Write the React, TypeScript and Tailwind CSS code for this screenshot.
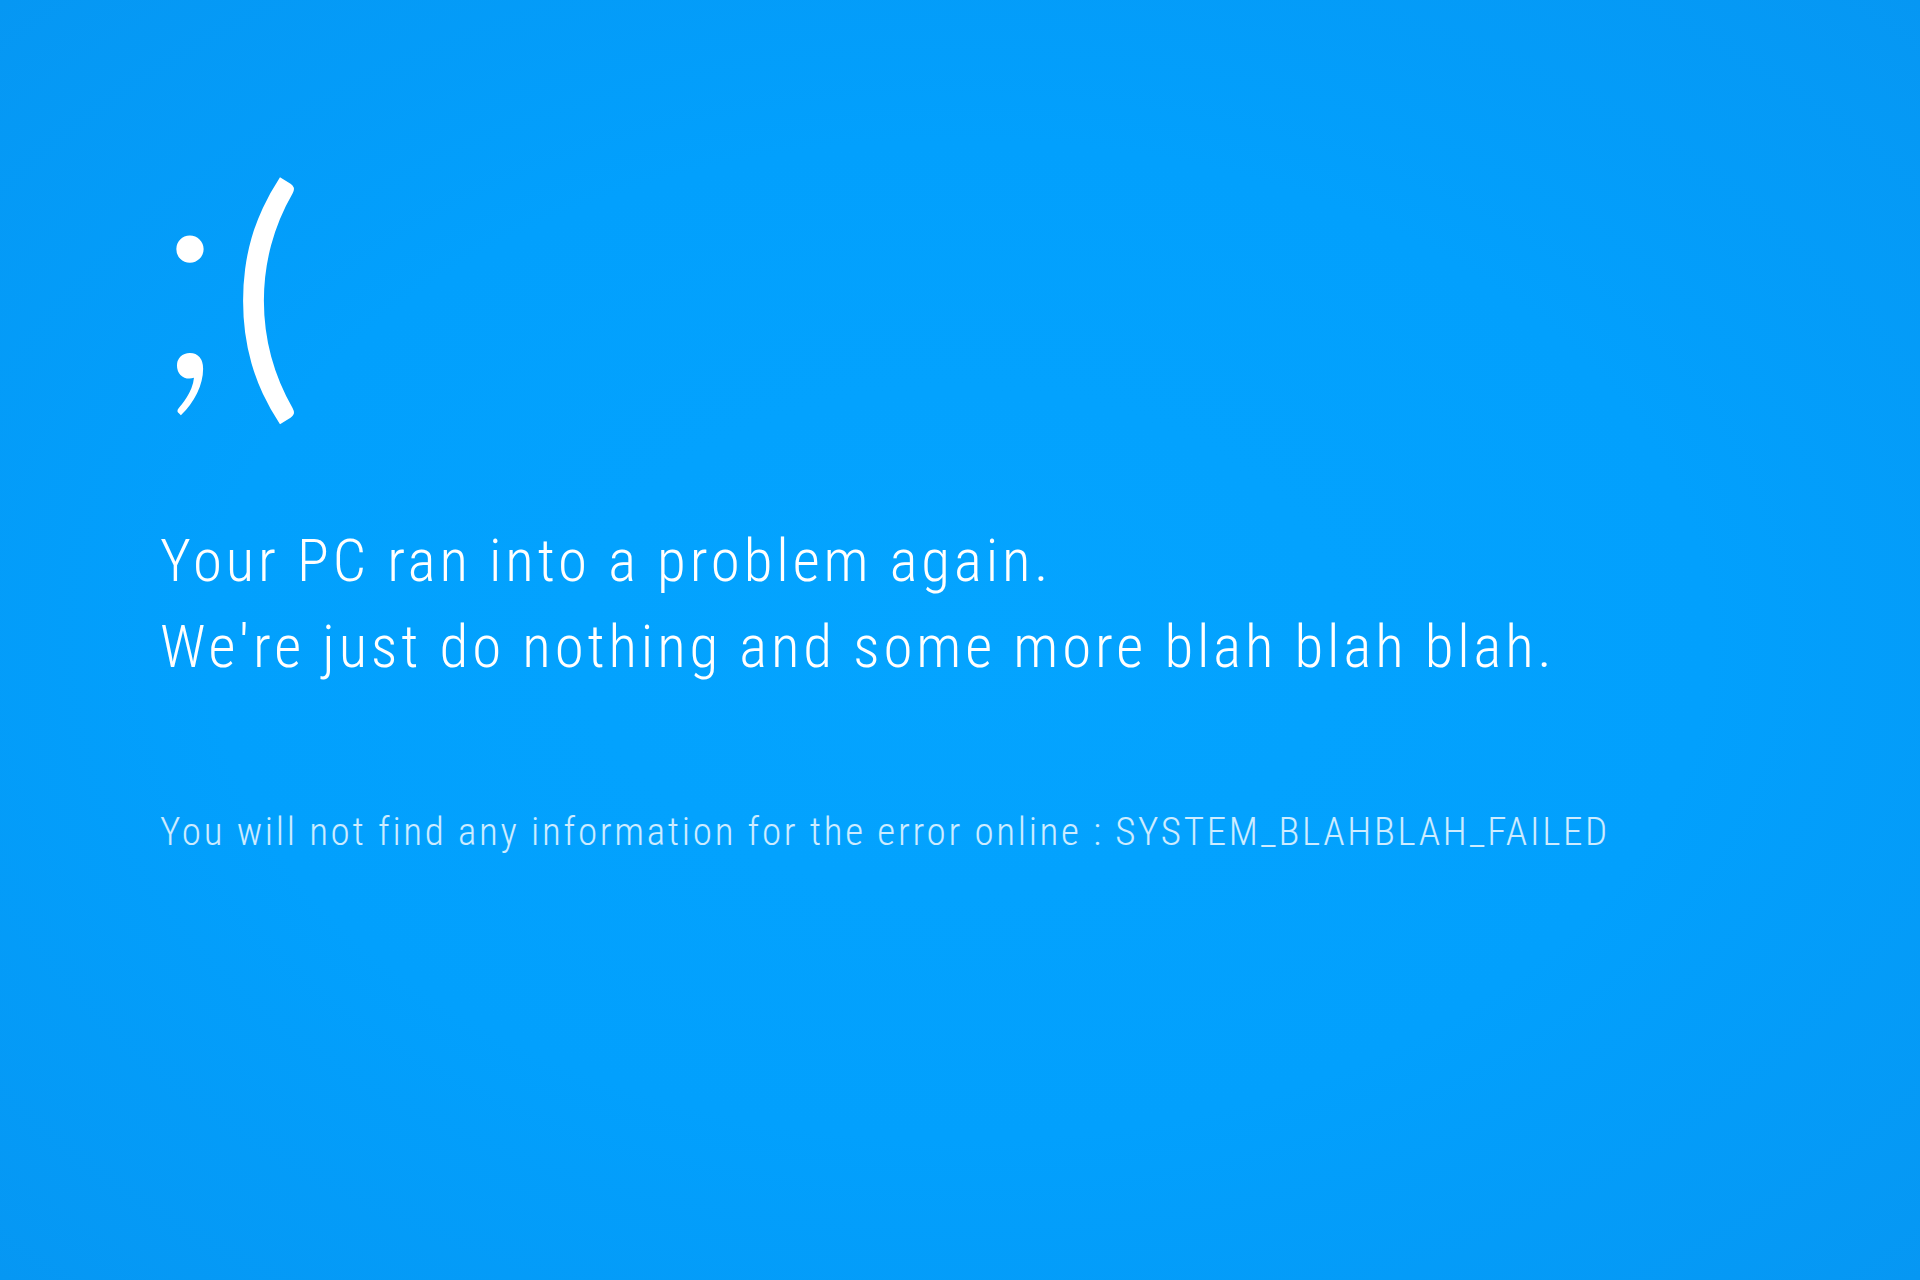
import React from "react";

export default function App() {
  return (
    <div className="h-[1280px] w-full overflow-hidden bg-[radial-gradient(ellipse_at_center,#04a4ff_0%,#02a0fd_55%,#0697f3_100%)] text-white">
      <div className="flex flex-col pl-[160px] pt-[124px]">
        <div className="flex items-baseline font-['Lato',sans-serif] leading-none">
          <span className="-ml-[7px] -translate-y-[7px] font-light text-[295px]">;</span>
          <span className="ml-[4px] font-normal text-[268px]">(</span>
        </div>
        <div className="mt-[99px] flex flex-col font-['Roboto',sans-serif] font-light [font-stretch:condensed] text-[59px] leading-[86px] tracking-[3.9px]">
          <p>Your PC ran into a problem again.</p>
          <p>We're just do nothing and some more blah blah blah.</p>
        </div>
        <p className="mt-[117px] font-['Roboto',sans-serif] font-light [font-stretch:condensed] text-[39px] leading-[50px] tracking-[2.7px] text-white/80">
          You will not find any information for the error online : SYSTEM_BLAHBLAH_FAILED
        </p>
      </div>
    </div>
  );
}
